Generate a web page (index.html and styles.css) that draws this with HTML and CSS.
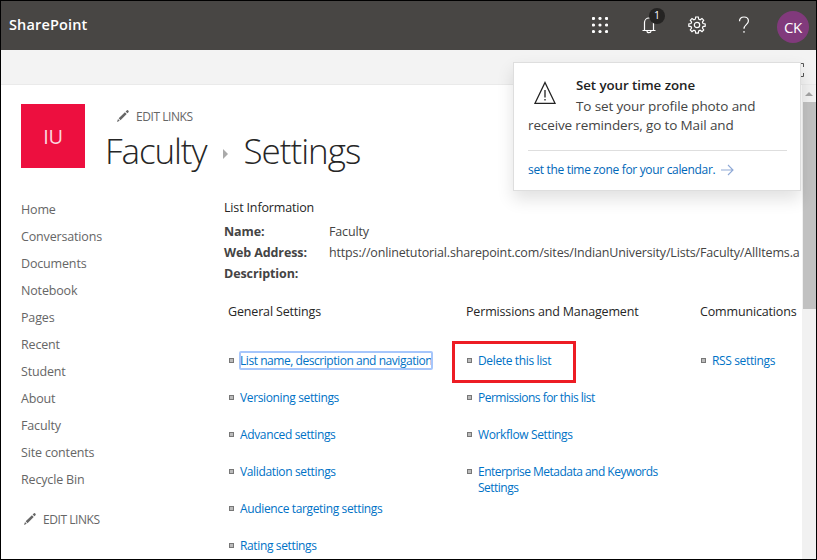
FILE: index.html
```html
<!DOCTYPE html>
<html lang="en">
<head>
<meta charset="utf-8">
<title>Faculty - Settings</title>
<link rel="stylesheet" href="styles.css">
</head>
<body>
<div class="window">
  <header class="suite-bar">
    <div class="brand">SharePoint</div>
    <div class="suite-icons">
      <svg class="waffle" width="16" height="16" viewBox="0 0 16 16" fill="#fff"><circle cx="1.500" cy="1.500" r="1.600"/><circle cx="8" cy="1.500" r="1.600"/><circle cx="14.500" cy="1.500" r="1.600"/><circle cx="1.500" cy="8" r="1.600"/><circle cx="8" cy="8" r="1.600"/><circle cx="14.500" cy="8" r="1.600"/><circle cx="1.500" cy="14.500" r="1.600"/><circle cx="8" cy="14.500" r="1.600"/><circle cx="14.500" cy="14.500" r="1.600"/></svg>
      <div class="bell">
        <svg width="16" height="18" viewBox="0 0 16 18" fill="none" stroke="#fff" stroke-width="1.200"><path d="M1.500 14.500h13M3.500 14.500V6.500a4.500 4.500 0 0 1 9 0v8M6 15a2 1.700 0 0 0 4 0"/></svg>
        <span class="badge">1</span>
      </div>
      <svg class="gear" width="18" height="18" viewBox="0 0 18 18" fill="none" stroke="#fff" stroke-width="1.200"><path d="M7.700 1h2.600l.4 2.200 1.400.6 1.900-1.300 1.700 1.700-1.300 1.900.6 1.400 2.200.4v2.300l-2.200.4-.6 1.400 1.300 1.900-1.700 1.700-1.900-1.300-1.400.6-.4 2.200H7.700l-.4-2.200-1.400-.6L4 15.600l-1.700-1.700L3.600 12 3 10.600.8 10.200V7.900L3 7.500l.6-1.400-1.300-1.900L4 2.500l1.900 1.300 1.400-.6z"/><circle cx="9" cy="9" r="2.700"/></svg>
      <svg class="help" width="12" height="18" viewBox="0 0 12 18" fill="none" stroke="#fff" stroke-width="1.200"><path d="M1.500 5.200C1.500 2.500 3.300 1 6 1s4.400 1.500 4.400 4c0 3.600-4.400 3.800-4.400 7.800M6 15v1.800"/></svg>
      <div class="avatar">CK</div>
    </div>
  </header>
  <div class="ribbon">
    <svg width="14" height="14" viewBox="0 0 14 14" fill="none" stroke="#555"><path d="M.5 4V.5H4M10 .5h3.500V4M13.500 10v3.500H10M4 13.500H.5V10"/></svg>
  </div>
  <div class="workspace">
    <div class="page">
      <div class="title-row">
        <div class="site-logo">IU</div>
        <div class="title-box">
          <a class="edit-links"><svg width="12" height="12" viewBox="0 0 12 12" fill="#666"><path d="M0 12l1-2.900 1.700 1.700zM1.700 8.300L7.900 2.200l1.800 1.800-6.200 6.200zM8.600 1.500L10 .2c.8-.4 2 .8 1.700 1.700l-1.300 1.400z"/></svg>EDIT LINKS</a>
          <h1><span class="t-list">Faculty</span><i class="crumb"></i><span class="t-page">Settings</span></h1>
        </div>
      </div>
      <div class="columns">
        <nav>
          <a>Home</a><a>Conversations</a><a>Documents</a><a>Notebook</a><a>Pages</a><a>Recent</a><a>Student</a><a>About</a><a>Faculty</a><a>Site contents</a><a>Recycle Bin</a>
          <a class="edit-links"><svg width="12" height="12" viewBox="0 0 12 12" fill="#666"><path d="M0 12l1-2.900 1.700 1.700zM1.700 8.300L7.900 2.200l1.800 1.800-6.200 6.200zM8.600 1.500L10 .2c.8-.4 2 .8 1.700 1.700l-1.300 1.400z"/></svg>EDIT LINKS</a>
        </nav>
        <main>
          <h2>List Information</h2>
          <dl>
            <dt>Name:</dt><dd>Faculty</dd>
            <dt>Web Address:</dt><dd class="url">https://onlinetutorial.sharepoint.com/sites/IndianUniversity/Lists/Faculty/AllItems.a</dd>
            <dt>Description:</dt><dd></dd>
          </dl>
          <div class="settings">
            <section>
              <h3>General Settings</h3>
              <ul>
                <li><a class="focused">List name, description and navigation</a></li>
                <li><a>Versioning settings</a></li>
                <li><a>Advanced settings</a></li>
                <li><a>Validation settings</a></li>
                <li><a>Audience targeting settings</a></li>
                <li><a>Rating settings</a></li>
              </ul>
            </section>
            <section>
              <h3>Permissions and Management</h3>
              <ul>
                <li class="marked"><a>Delete this list</a></li>
                <li class="tight"><a>Permissions for this list</a></li>
                <li><a>Workflow Settings</a></li>
                <li class="tight"><a>Enterprise Metadata and Keywords<br>Settings</a></li>
              </ul>
            </section>
            <section>
              <h3>Communications</h3>
              <ul><li><a>RSS settings</a></li></ul>
            </section>
          </div>
        </main>
      </div>
    </div>
    <div class="scrollbar"><i class="arrow"></i><i class="thumb"></i></div>
  </div>
  <aside class="toast">
    <div class="toast-body">
      <svg width="24" height="24" viewBox="0 0 24 24" fill="none" stroke="#222" stroke-width="1.300"><path d="M12 1.500L22 22.300H2z"/><path d="M12 9v7.500M12 18v1.500"/></svg>
      <strong>Set your time zone</strong>
      <p>To set your profile photo and<br>receive reminders, go to Mail and</p>
    </div>
    <a class="toast-link"><span>set the time zone for your calendar.</span><svg width="13" height="12" viewBox="0 0 13 12" fill="none" stroke="#8fa9d6" stroke-width="1.100"><path d="M0 6h12M7 1l5 5-5 5"/></svg></a>
  </aside>
</div>
</body>
</html>
```
FILE: styles.css
```css
*, *::before, *::after { box-sizing: border-box; }
body, h1, h2, h3, ul, dl, dd, p { margin: 0; padding: 0; }
h2, h3, h1 { font-weight: 400; }
ul { list-style: none; }
body { font-family: "Open Sans", "Noto Sans", sans-serif; font-size: 12.5px; letter-spacing: -0.16px; color: #444; }

.window { position: relative; display: flex; flex-direction: column; width: 817px; height: 560px; border: 1px solid #000; background: #fff; overflow: hidden; }

.suite-bar { display: flex; justify-content: space-between; align-items: center; height: 49px; padding: 0 7px 0 8px; background: #484644; color: #fff; flex: none; }
.brand { font-size: 14.5px; font-weight: 600; letter-spacing: 0.15px; line-height: 20px; padding-bottom: 2px; }
.suite-icons { display: flex; align-items: center; }
.waffle { margin: -2px 33px 0 0; }
.bell { position: relative; height: 18px; margin: -2px 31px 0 0; }
.bell svg, .gear, .help { display: block; }
.badge { position: absolute; left: 8px; top: -8px; width: 16px; height: 16px; border-radius: 50%; background: #252423; font-size: 10.5px; line-height: 15px; text-align: center; }
.gear { margin: -1px 32px 0 0; }
.help { margin: -1px 27px 0 0; }
.avatar { width: 32px; height: 32px; border-radius: 50%; background: #813a7c; font-size: 15px; line-height: 32px; text-align: center; letter-spacing: -0.2px; margin-top: 2px; }

.ribbon { display: flex; justify-content: flex-end; align-items: flex-start; height: 35px; padding: 13px 12px 0 0; background: #f3f3f3; border-bottom: 1px solid #eaeaea; flex: none; }

.workspace { display: flex; flex: 1; min-height: 0; }
.page { flex: 1; min-width: 0; overflow: hidden; padding: 19px 0 0 20px; }
.title-row { display: flex; height: 95px; }
.site-logo { width: 64px; height: 64px; background: #ed0f3f; color: #fbd7df; font-size: 20px; line-height: 66px; text-align: center; letter-spacing: -0.3px; }
.title-box { margin-left: 20px; }
.edit-links { display: flex; align-items: center; gap: 7px; color: #666; font-size: 12px; letter-spacing: -0.45px; line-height: 20px; }
.edit-links svg { margin-top: -2px; }
.title-box .edit-links { margin: 3px 0 0 12px; }
h1 { display: flex; align-items: center; height: 48px; font-size: 35px; line-height: 48px; font-weight: 300; letter-spacing: -1.1px; color: #262626; }
.crumb { margin: 6px 15px 0 17px; border: solid transparent; border-width: 5px 0 5px 5px; border-left-color: #aaa; }
.t-page { letter-spacing: -1px; }

.columns { display: flex; }
nav { width: 203px; flex: none; margin-top: -3px; }
nav a { display: block; height: 27px; line-height: 27px; color: #666; }
nav .edit-links { display: flex; height: 20px; line-height: 20px; margin: 17px 0 0 3px; }
main { flex: 1; min-width: 0; }
h2 { font-size: 12.5px; line-height: 18px; color: #262626; }
dl { display: grid; grid-template-columns: 105px 1fr; grid-auto-rows: 21px; line-height: 21px; margin-top: 4px; }
dt { font-weight: 700; letter-spacing: -0.1px; }
dd { white-space: nowrap; }
.settings { display: grid; grid-template-columns: 238px 234px auto; margin: 18px 0 0 4px; }
h3 { font-size: 12.5px; line-height: 20px; color: #262626; white-space: nowrap; }
.settings ul { margin-top: 22px; }
.settings li { position: relative; display: flex; height: 37px; padding-top: 9px; font-size: 12px; letter-spacing: -0.36px; line-height: 16px; white-space: nowrap; color: #0072c6; }
.settings li::before { content: ""; width: 5px; height: 5px; margin: 5px 6px 0 1px; border: 1px solid #777; background: #bbb; flex: none; }
.settings .tight { letter-spacing: -0.52px; }
.focused { height: 16px; border-radius: 1px; outline: 2px solid #a6c6fb; outline-offset: -1px; letter-spacing: -0.45px; height: 17px; margin-top: -1px; padding-top: 1px; }
.marked::after { content: ""; position: absolute; left: -14px; top: -3px; width: 124px; height: 42px; border: 3px solid #ed1c24; }

.scrollbar { display: flex; flex-direction: column; width: 14px; flex: none; background: #f1f1f1; }
.arrow { margin: 7px 0 6px 3px; width: 0; border: solid transparent; border-width: 0 4px 4px; border-bottom-color: #a3a3a3; }
.thumb { width: 13px; height: 207px; margin-left: 1px; background: #c1c1c1; }

.toast { position: absolute; left: 512px; top: 61px; width: 288px; height: 129px; padding: 12px 13px 0 14px; background: #fff; border: 1px solid #dedede; box-shadow: 0 8px 16px rgba(0,0,0,.12); }
.toast-body { height: 76px; border-bottom: 1px solid #dedede; font-size: 13.5px; letter-spacing: -0.13px; }
.toast-body svg { float: left; margin: 6px 19px 10px 5px; }
.toast-body strong { display: block; font-weight: 600; font-size: 13.3px; letter-spacing: -0.05px; line-height: 20px; color: #222; }
.toast-body p { line-height: 19px; margin-top: 2px; white-space: nowrap; }
.toast-link { display: flex; align-items: center; gap: 6px; height: 37px; color: #0067b8; font-size: 12px; letter-spacing: -0.33px; }
```
